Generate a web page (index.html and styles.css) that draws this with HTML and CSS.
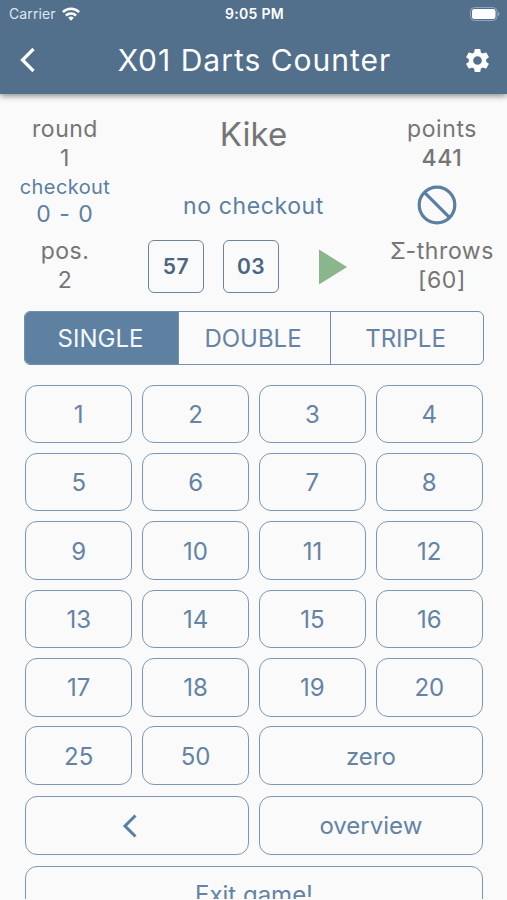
FILE: index.html
```html
<!DOCTYPE html>
<html lang="en">
  <head>
    <meta charset="UTF-8" />
    <meta name="viewport" content="width=device-width, initial-scale=1.0" />
    <title>X01 Darts Counter</title>
    <link rel="stylesheet" href="styles.css">
  </head>
  <body>
    <div class="header">
      <div class="status">
        <div class="carrier">
          <span>Carrier</span>
          <svg width="18" height="14" viewBox="0 0 18 14" fill="none" stroke="#fff" stroke-width="2.5">
            <path d="M0.9 5.2 a11.5 11.5 0 0 1 16.2 0" />
            <path d="M3.9 8.5 a7.3 7.3 0 0 1 10.2 0" />
            <path d="M9 13.8 l-2.8 -3 a4 4 0 0 1 5.6 0 z" fill="#fff" stroke="none" />
          </svg>
        </div>
        <span class="time">9:05 PM</span>
        <svg class="battery" width="30" height="14" viewBox="0 0 30 14">
          <rect x="0.5" y="0.5" width="26.5" height="13" rx="4" fill="none" stroke="#91a5b8" />
          <rect x="2" y="2" width="23.5" height="10" rx="2.3" fill="#fff" />
          <path d="M28 4.8 q3 2.2 0 4.4 z" fill="#91a5b8" />
        </svg>
      </div>
      <div class="navbar">
        <svg width="20" height="26" viewBox="0 0 20 26" fill="none" stroke="#fff" stroke-width="3.2">
          <path d="M15.5 2 L4.5 13 L15.5 24" />
        </svg>
        <h1>X01 Darts Counter</h1>
        <svg class="gear" width="29" height="29" viewBox="0 0 24 24" fill="#fff">
          <path d="M19.14 12.94c.04-.3.06-.61.06-.94 0-.32-.02-.64-.07-.94l2.03-1.58c.18-.14.23-.41.12-.61l-1.92-3.32c-.12-.22-.37-.29-.59-.22l-2.39.96c-.5-.38-1.03-.7-1.62-.94l-.36-2.54c-.04-.24-.24-.41-.48-.41h-3.84c-.24 0-.43.17-.47.41l-.36 2.54c-.59.24-1.13.57-1.62.94l-2.39-.96c-.22-.08-.47 0-.59.22L2.74 8.87c-.12.21-.08.47.12.61l2.03 1.58c-.05.3-.09.63-.09.94s.02.64.07.94l-2.03 1.58c-.18.14-.23.41-.12.61l1.92 3.32c.12.22.37.29.59.22l2.39-.96c.5.38 1.03.7 1.62.94l.36 2.54c.05.24.24.41.48.41h3.84c.24 0 .44-.17.47-.41l.36-2.54c.59-.24 1.13-.56 1.62-.94l2.39.96c.22.08.47 0 .59-.22l1.92-3.32c.12-.22.07-.47-.12-.61l-2.01-1.58zM12 15.6c-1.98 0-3.6-1.62-3.6-3.6s1.62-3.6 3.6-3.6 3.6 1.62 3.6 3.6-1.62 3.6-3.6 3.6z" />
        </svg>
      </div>
    </div>

    <div class="board">
      <div class="side">
        <div class="stat">round<br>1</div>
        <div class="checkout"><span>checkout</span><br>0 - 0</div>
        <div class="stat">pos.<br>2</div>
      </div>
      <div class="player">
        <div class="name">Kike</div>
        <div class="hint">no checkout</div>
        <div class="throws">
          <div class="throw">57</div>
          <div class="throw">03</div>
          <svg width="28" height="36" viewBox="0 0 28 36">
            <path d="M0 0.5 L28 18 L0 35.5 z" fill="#8ab68d" />
          </svg>
        </div>
      </div>
      <div class="side right">
        <div class="stat">points<br><b>441</b></div>
        <svg class="ban" width="40" height="40" viewBox="0 0 40 40" fill="none" stroke="#5b7fa3" stroke-width="3.2">
          <circle cx="20" cy="20" r="17.8" />
          <path d="M7.6 7.6 L32.4 32.4" />
        </svg>
        <div class="stat">Σ-throws<br>[60]</div>
      </div>
    </div>

    <div class="modes">
      <button class="active">SINGLE</button>
      <button>DOUBLE</button>
      <button>TRIPLE</button>
    </div>

    <div class="keys">
      <button>1</button>
      <button>2</button>
      <button>3</button>
      <button>4</button>
      <button>5</button>
      <button>6</button>
      <button>7</button>
      <button>8</button>
      <button>9</button>
      <button>10</button>
      <button>11</button>
      <button>12</button>
      <button>13</button>
      <button>14</button>
      <button>15</button>
      <button>16</button>
      <button>17</button>
      <button>18</button>
      <button>19</button>
      <button>20</button>
      <button>25</button>
      <button>50</button>
      <button class="wide">zero</button>
    </div>
    <div class="keys actions">
      <button class="wide undo">
        <svg width="16" height="26" viewBox="0 0 16 26" fill="none" stroke="#5b7fa3" stroke-width="3">
          <path d="M13.5 2.5 L3 13 L13.5 23.5" />
        </svg>
      </button>
      <button class="wide">overview</button>
      <button class="full">Exit game!</button>
    </div>
  </body>
</html>
```
FILE: styles.css
```css
* {
  box-sizing: border-box;
}
html {
  background: #fafafa;
  overflow: hidden;
}
body {
  margin: 0;
  height: 899px;
  overflow: hidden;
  font-family: Inter, sans-serif;
  background: #fafafa;
  color: #757575;
}
svg {
  display: block;
}
.header {
  height: 94px;
  background: #526f8c;
  color: #fff;
  box-shadow: 0 2px 6px rgba(0, 0, 0, 0.45);
}
.status {
  height: 27px;
  padding: 0 7px 0 9px;
  display: grid;
  grid-template-columns: 1fr auto 1fr;
  align-items: center;
  font-size: 14px;
}
.carrier {
  display: flex;
  align-items: center;
  gap: 6px;
  color: #dfe7ee;
  letter-spacing: 0.1px;
}
.time {
  font-size: 14px;
  font-weight: 600;
  letter-spacing: 0.3px;
}
.battery {
  justify-self: end;
}
.navbar {
  height: 66px;
  padding: 0 15px 0 18px;
  display: flex;
  align-items: center;
  justify-content: space-between;
}
h1 {
  margin: 0 0 0 8px;
  font-size: 30px;
  font-weight: 400;
  letter-spacing: 1px;
}
.board {
  height: 217px;
  padding: 20px 0 0;
  display: grid;
  grid-template-columns: 130px 1fr 130px;
  text-align: center;
}
.side {
  font-size: 23px;
  line-height: 29px;
}
.stat {
  padding-top: 1px;
  margin-bottom: -1px;
  letter-spacing: 0.5px;
}
.right .stat {
  letter-spacing: 0.6px;
}
.stat b {
  font-weight: 500;
}
.checkout {
  margin: 1px 0 8px;
  color: #5b7fa3;
  line-height: 27px;
  letter-spacing: 1px;
}
.checkout span {
  font-size: 20px;
  letter-spacing: 0.4px;
}
.ban {
  margin: 13px auto 11px 40px;
}
.name {
  font-size: 33px;
  line-height: 40px;
}
.hint {
  margin-top: 38px;
  color: #5b7fa3;
  font-size: 23px;
  line-height: 29px;
  letter-spacing: 0.6px;
}
.throws {
  margin-top: 19px;
  display: flex;
  align-items: center;
  padding-left: 18px;
  gap: 19px;
}
.throws svg {
  margin-left: 21px;
}
.throw {
  width: 56px;
  height: 53px;
  border: 1.5px solid #6a84a0;
  border-radius: 6px;
  color: #4b6480;
  font-size: 21px;
  font-weight: 600;
  line-height: 52px;
  letter-spacing: 0.5px;
}
button {
  padding: 0;
  font-family: inherit;
  font-size: 24px;
  color: #6483a5;
  background: none;
  border: none;
}
.modes {
  height: 54px;
  margin: 0 23px 0 24px;
  display: grid;
  grid-template-columns: 153px 152px 1fr;
  border: 1px solid #7190b1;
  border-radius: 6px;
  overflow: hidden;
}
.modes button {
  padding-right: 2px;
}
.modes button + button {
  padding-right: 3px;
  border-left: 1px solid #7190b1;
}
.modes .active {
  background: #5f81a1;
  color: #f4f8fd;
}
.keys {
  margin: 19.5px 24px 0 25px;
  display: grid;
  grid-template-columns: repeat(4, 1fr);
  grid-auto-rows: 58.6px;
  gap: 9.8px 9.4px;
}
.keys button {
  padding-top: 1px;
  border: 1.5px solid #7c97b4;
  border-radius: 12px;
}
.actions {
  margin-top: 11px;
  gap: 11px 9.4px;
}
.keys .wide {
  grid-column: span 2;
}
.keys .full {
  grid-column: span 4;
  padding-top: 0;
}
.keys .undo {
  padding-right: 14px;
}
.keys svg {
  margin: 0 auto;
}
```
